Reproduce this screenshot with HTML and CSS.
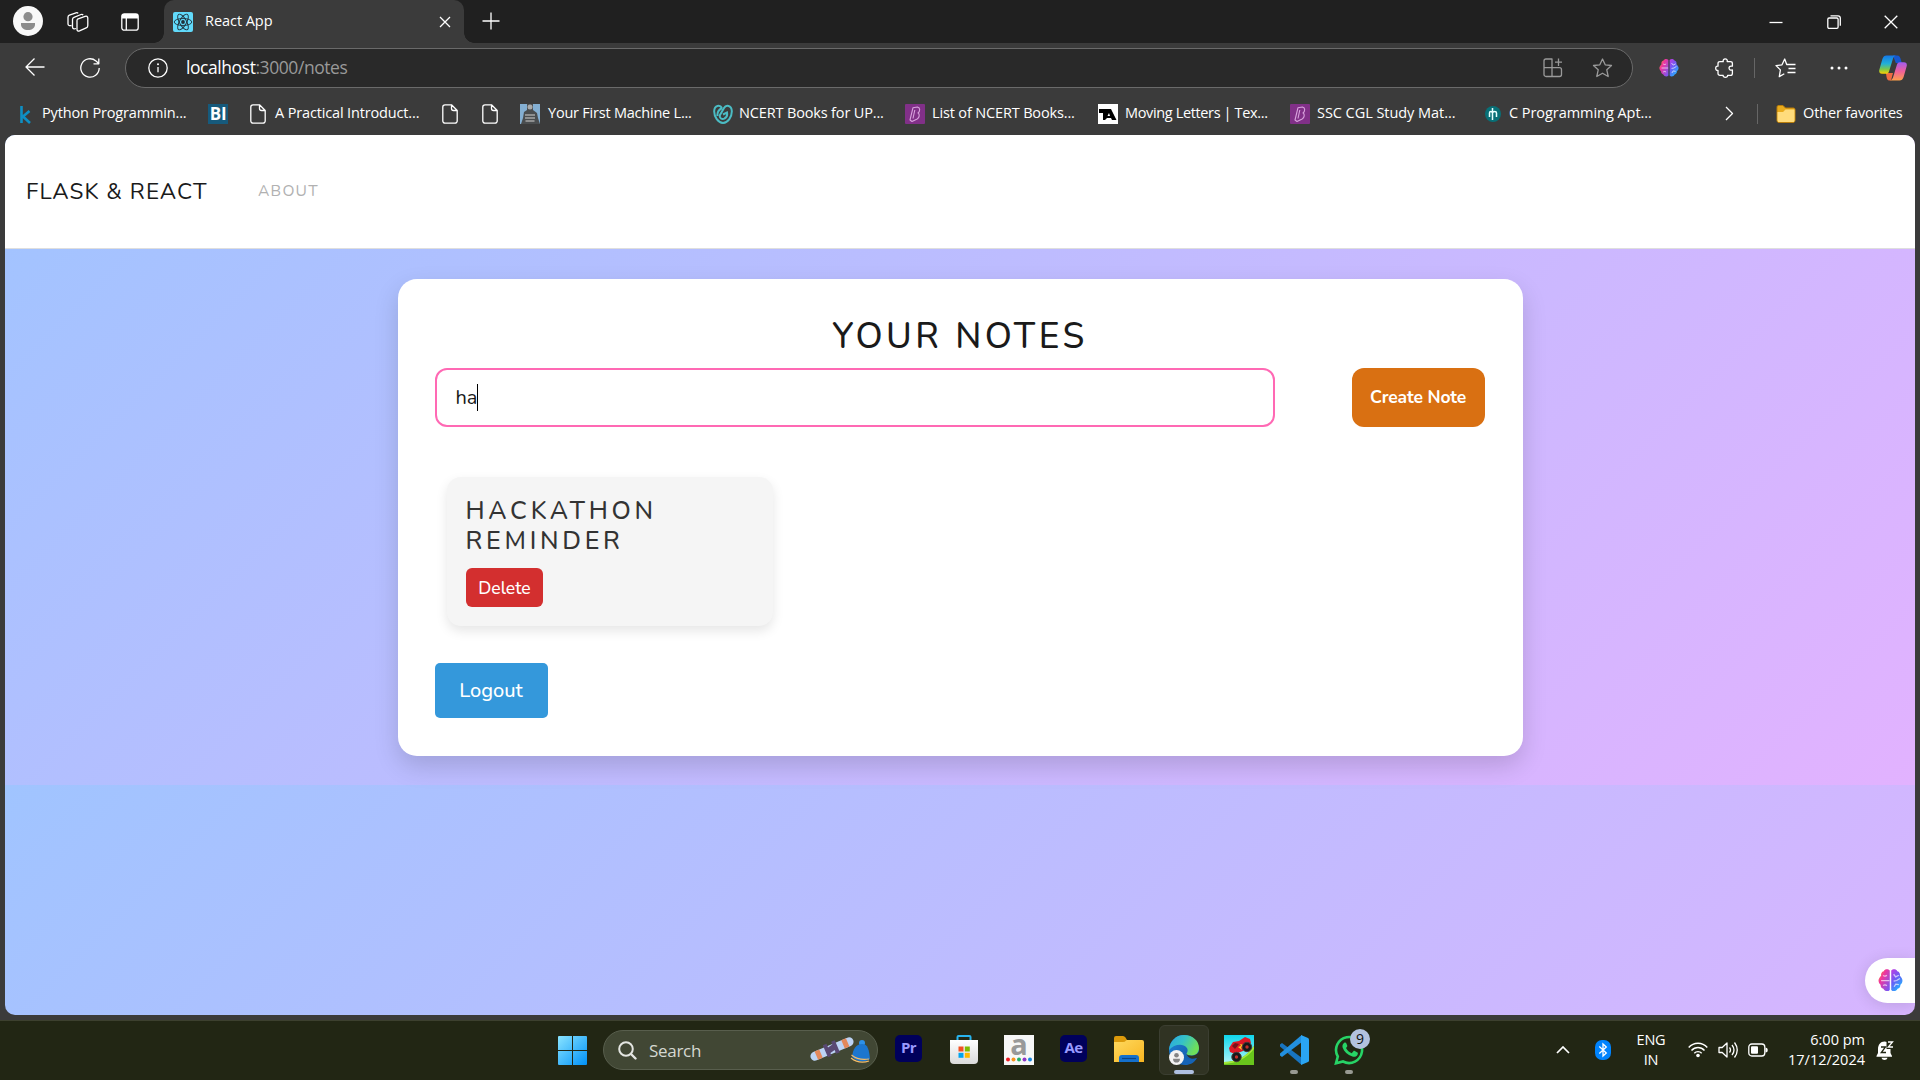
FILE: index.html
```html
<!DOCTYPE html>
<html lang="en">
<head>
<meta charset="utf-8">
<title>React App</title>
<link rel="stylesheet" href="styles.css">
</head>
<body>
<svg class="defs" width="0" height="0">
  <defs>
    <linearGradient id="brainL" x1="0" y1="0" x2="1" y2="1"><stop offset="0" stop-color="#ffa21f"/><stop offset=".35" stop-color="#f0359c"/><stop offset="1" stop-color="#6a5cff"/></linearGradient>
    <linearGradient id="brainR" x1="0" y1="0" x2=".6" y2="1"><stop offset="0" stop-color="#c23be0"/><stop offset=".5" stop-color="#6b5cf5"/><stop offset="1" stop-color="#22b4ff"/></linearGradient>
    <linearGradient id="win" x1="0" y1="0" x2="1" y2="1"><stop offset="0" stop-color="#8ae4ff"/><stop offset="1" stop-color="#0091f8"/></linearGradient>
    <linearGradient id="cpA" x1="0" y1="0" x2="0" y2="1"><stop offset="0" stop-color="#1478e8"/><stop offset=".45" stop-color="#22b0d8"/><stop offset=".75" stop-color="#7cc84a"/><stop offset="1" stop-color="#ffd000"/></linearGradient>
    <linearGradient id="cpB" x1="0" y1="0" x2="0" y2="1"><stop offset="0" stop-color="#a05cf0"/><stop offset=".5" stop-color="#f0609a"/><stop offset="1" stop-color="#ffa04a"/></linearGradient>
    <linearGradient id="fold" x1="0" y1="0" x2="1" y2="1"><stop offset="0" stop-color="#ffd95e"/><stop offset="1" stop-color="#f8b521"/></linearGradient>
    <linearGradient id="edgeA" x1="0" y1="0" x2="1" y2=".4"><stop offset="0" stop-color="#2aa6e0"/><stop offset=".5" stop-color="#35c1c8"/><stop offset="1" stop-color="#6ee05a"/></linearGradient>
    <linearGradient id="edgeB" x1="0" y1="0" x2="1" y2="1"><stop offset="0" stop-color="#2186d8"/><stop offset="1" stop-color="#0d4ea0"/></linearGradient>
    <linearGradient id="bag" x1="0" y1="0" x2="0" y2="1"><stop offset="0" stop-color="#ffffff"/><stop offset="1" stop-color="#dadada"/></linearGradient>
    <linearGradient id="sky" x1="0" y1="0" x2="0" y2="1"><stop offset="0" stop-color="#0fd6ec"/><stop offset="1" stop-color="#b8f5fb"/></linearGradient>
    <symbol id="brain" viewBox="0 0 24 24">
      <path fill="url(#brainL)" d="M11.3 2.5C9.8.6 6.500.8 5.500 3 3.500 3.300 2.500 5.500 3 7.500 1.500 9 0 11 .6 13c.2 1.500 1.200 2.500 1.900 3-.1 2 1 3.500 2.700 3.800.9 2.400 4.400 3.200 6.100 1.200z"/>
      <path fill="url(#brainR)" d="M12.700 2.500c1.500-1.900 4.800-1.700 5.800.5 2 .3 3 2.500 2.500 4.500 1.500 1.500 3 3.500 2.400 5.500-.2 1.500-1.200 2.500-1.900 3 .1 2-1 3.500-2.700 3.800-.9 2.400-4.400 3.200-6.100 1.200z"/>
      <path class="folds" d="M3 12h8M5 7c1 1.300 2.500 1 3.500 0M5 17c1-1.300 2.500-1 3.500 0M15 6l2 2.500L20 7M15 12.500l3-.5 3-2M15.500 18l1.500-2.500 3 .5"/>
    </symbol>
    <symbol id="doc" viewBox="0 0 16 20"><path class="ln" d="M3 .8h6.500L15.200 6.500V17a2.200 2.200 0 0 1-2.200 2.200H3A2.200 2.200 0 0 1 .8 17V3A2.200 2.200 0 0 1 3 .8zM9.500 1v3.500a2 2 0 0 0 2 2H15"/></symbol>
    <symbol id="byju" viewBox="0 0 20 20"><rect width="20" height="20" rx="1" fill="#813088"/><path fill="none" stroke="#d9a3de" stroke-width="1.100" stroke-linejoin="round" d="M8 3.700 12.500 3c2.800.6 2.800 4.300.5 6 2 1 1.500 4.800-.8 6L7 17.500 5 16zM9.800 6 8 14.500"/></symbol>
  </defs>
</svg>

<header class="tabs">
  <svg class="avatar" viewBox="0 0 30 30"><circle cx="15" cy="15" r="15" fill="#f8f8f8"/><circle cx="15" cy="10.700" r="4.600" fill="#8c8c8c"/><path fill="#8c8c8c" d="M8 17h14v1.500c0 3.500-3 5.500-7 5.500s-7-2-7-5.500z"/></svg>
  <svg class="workspaces" viewBox="0 0 22 20"><path class="ln" d="M10.500 7.200 18 4.300c1.500-.5 2.800 0 2.800 1.700v7.500c0 1.300-.5 2-1.600 2.400l-6.700 3c-1.300.5-2.500 0-2.500-1.500V8.700c0-.8.200-1.300.5-1.500zM9 16.500c-2 .8-3.500.3-3.500-1.500V7.500c0-1 .5-1.700 1.500-2.100L14 2.500c1-.3 1.800 0 2.100.6M4.500 13.500C2.500 14 1 13.500 1 12V5.200c0-1 .5-1.600 1.400-2L9 .8c1-.3 1.700-.1 2.100.5"/></svg>
  <svg class="tabmenu" viewBox="0 0 18 18"><rect class="ln" x=".8" y=".8" width="16.400" height="16.400" rx="2.500"/><path fill="#fff" d="M1 1h16v4.500H1z"/><path class="ln" d="M5.300 5v12"/></svg>
  <div class="tab">
    <svg class="react" viewBox="0 0 20 20"><rect width="20" height="20" rx="2" fill="#61dafb"/><g fill="none" stroke="#20303a" stroke-width=".9"><ellipse cx="10" cy="10" rx="8.800" ry="3.500"/><ellipse cx="10" cy="10" rx="8.800" ry="3.500" transform="rotate(60 10 10)"/><ellipse cx="10" cy="10" rx="8.800" ry="3.500" transform="rotate(120 10 10)"/></g><circle cx="10" cy="10" r="1.900" fill="#20303a"/></svg>
    <span class="tab-title">React App</span>
    <svg class="tab-close" viewBox="0 0 12 12"><path class="ln" d="M1 1l10 10M11 1 1 11"/></svg>
  </div>
  <svg class="plus" viewBox="0 0 18 18"><path class="ln" d="M9 .5v17M.5 9h17"/></svg>
  <div class="window-buttons">
    <svg width="14" height="14" viewBox="0 0 14 14"><path class="ln" d="M.5 7.500h13"/></svg>
    <svg width="14" height="14" viewBox="0 0 14 14"><rect class="ln" x=".8" y="3" width="10.300" height="10.300" rx="1.300"/><path class="ln" d="M3.500.8H11a2.300 2.300 0 0 1 2.300 2.300v7.700"/></svg>
    <svg width="14" height="14" viewBox="0 0 14 14"><path class="ln" d="M.7.7l12.600 12.600M13.300.7.7 13.300"/></svg>
  </div>
</header>

<div class="toolbar">
  <svg class="back" viewBox="0 0 20 18"><path class="ln" d="M19.500 9H1M9.500.5 1 9l8.500 8.500"/></svg>
  <svg class="reload" viewBox="0 0 20 20"><path class="ln" d="M19.200 10A9.200 9.200 0 1 1 16 3l2.500 2.300M18.800.5v5.300h-5.300"/></svg>
  <div class="address">
    <svg width="20" height="20" viewBox="0 0 20 20"><circle class="ln" cx="10" cy="10" r="9.200"/><path class="ln" d="M10 9v5.200"/><circle cx="10" cy="6.200" r="1" fill="#fff"/></svg>
    <span class="url"><b>localhost</b>:3000/notes</span>
    <svg class="apps" viewBox="0 0 20 20"><path class="dim" d="M1 3a2 2 0 0 1 2-2h6v17.500H3a2 2 0 0 1-2-2zM1 9.700h15.500a2 2 0 0 1 2 2v4.800a2 2 0 0 1-2 2H9M15.500.5V8M12 4.200h7"/></svg>
    <svg class="star" viewBox="0 0 20 20"><path class="dim" d="m10 1 2.700 5.800 6.300.7-4.700 4.300 1.400 6.700L10 15.200l-5.700 3.300 1.400-6.700L1 7.500l6.300-.7z"/></svg>
  </div>
  <svg class="brain-icon" width="20" height="20"><use href="#brain"/></svg>
  <svg class="puzzle" viewBox="0 0 20 20"><path class="ln" d="M5 3.700h3.200C7.800 1.800 8.800.8 10.200.8s2.500 1 2 2.900h3.200c1.300 0 2 .6 2 1.800v2.700c-1.900-.4-3.400.3-3.400 1.900s1.500 2.400 3.400 1.900v3.400c0 1.200-.8 1.900-2 1.900h-2.800c.2 1.400-.8 2-2.200 2s-2.500-.6-2.200-2H5c-1.300 0-2-.7-2-1.900v-3c-1.500.2-2.300-.7-2.300-2.200S1.600 7.800 3 8.100V5.500c0-1.200.8-1.800 2-1.800z"/></svg>
  <i class="divider"></i>
  <svg class="favs" viewBox="0 0 21 20"><path class="ln" d="M14 6.500h-2.300L9.700 1 7 6.800 1 7.600l4.400 4.300-1.100 6.700 5-2.900M20.500 6.500H14M20.500 10.500h-7M20.500 14.500h-8"/></svg>
  <svg class="more" viewBox="0 0 18 4"><g fill="#fff"><circle cx="2" cy="2" r="1.500"/><circle cx="9" cy="2" r="1.500"/><circle cx="16" cy="2" r="1.500"/></g></svg>
  <svg class="copilot" viewBox="0 0 28 26"><path fill="#1657cf" d="M14 .5h4c2.500 0 3.300 2 3.800 4l1 3.500h-6z"/><path fill="#f06a42" d="M7 18h7l-2 7.500h-1.500C8 25.500 7.500 23 7 18z"/><path fill="url(#cpA)" d="M7.500.5H17c-2 .5-2.700 2-3.300 4L10 16.500c-.5 1.500-1.500 2.300-3 2.300H3c-2.500 0-3.300-1.800-2.600-4.300l3-10.500C4.200 1.500 5.500.5 7.500.5z"/><path fill="url(#cpB)" d="M20.500 25.500H11c2-.5 2.700-2 3.300-4L18 9.500c.5-1.500 1.500-2.300 3-2.300h4c2.500 0 3.300 1.800 2.600 4.300l-3 10.500c-.8 2.500-2.100 3.500-4.100 3.500z"/></svg>
</div>

<nav class="bookmarks">
  <a class="bm b1"><svg viewBox="0 0 20 20"><path fill="none" stroke="#0e8fc4" stroke-width="2.600" d="M6.500 2v17M14.500 7 8 12.500l7 6.500"/></svg><span>Python Programmin...</span></a>
  <a class="bm b2"><b class="bi">BI</b></a>
  <a class="bm b3"><svg class="page-icon"><use href="#doc"/></svg><span>A Practical Introduct...</span></a>
  <a class="bm b4"><svg class="page-icon"><use href="#doc"/></svg></a>
  <a class="bm b5"><svg class="page-icon"><use href="#doc"/></svg></a>
  <a class="bm b6"><svg viewBox="0 0 20 20"><path fill="#84afd2" d="M0 0h20v20H0z"/><path fill="#4a4d4f" d="M7 0h6v6l4 3 1 5 2 6H1l2-6 1-6 3-2z"/><circle cx="10" cy="3" r="2.500" fill="#aaa"/><path stroke="#a5a5a5" stroke-width="1.500" d="M5 11h10M5 14h10M5.500 17h9"/></svg><span>Your First Machine L...</span></a>
  <a class="bm b7"><svg viewBox="0 0 20 20"><path fill="none" stroke="#4bbcc4" stroke-width="2" d="M9 4C7 .5 1.500 1 1.200 7c-.2 6 4 11.500 8.800 12 5-.5 9-6 8.800-12C18.500 1 13 .5 11 4L7 11c-1 3 2 5 4.500 3.500 2-1 3-3.500 2.500-6l-4 2M9 4c-3 1.500-5 4-4.500 8"/></svg><span>NCERT Books for UP...</span></a>
  <a class="bm b8"><svg><use href="#byju"/></svg><span>List of NCERT Books...</span></a>
  <a class="bm b9"><svg viewBox="0 0 20 20"><path fill="#fff" d="M0 0h20v20H0z"/><path d="M1 5h12l5.500 11H14l-1-2H9l-2 2H5V9H1zm10 4-1.500 3H12z"/></svg><span>Moving Letters | Tex...</span></a>
  <a class="bm b10"><svg><use href="#byju"/></svg><span>SSC CGL Study Mat...</span></a>
  <a class="bm b11"><svg viewBox="0 0 20 20"><circle cx="10" cy="10" r="8" fill="#087077"/><path fill="none" stroke="#e8ffff" stroke-width="1.500" d="M6.500 13V9c0-2 2.500-2 3 0v7M9.500 4v5c.5-2 4-2 4 0v4"/></svg><span>C Programming Apt...</span></a>
  <svg class="chev" viewBox="0 0 9 15"><path class="ln" d="m1 1 6.500 6.500L1 14"/></svg>
  <i class="divider"></i>
  <a class="bm b12"><svg viewBox="0 0 20 20"><path fill="#e9ab1c" stroke="#b97d0b" d="M1 3.500C1 2 1.500 1.500 3 1.500h4L9.500 4H17c1.500 0 2 .5 2 2v10c0 1.500-.5 2.500-2 2.500H3c-1.500 0-2-1-2-2.500z"/><path fill="#ffdc7c" d="M1.500 8H7l2.500-2.500h9V16c0 1.500-.5 2-1.500 2H3c-1 0-1.500-.5-1.500-2z"/></svg><span>Other favorites</span></a>
</nav>

<main class="viewport">
  <nav class="site-nav"><a class="brand">FLASK &amp; REACT</a><a class="about">ABOUT</a></nav>
  <section class="stage">
    <div class="card">
      <h1>YOUR NOTES</h1>
      <div class="form"><div class="field">ha<i class="caret"></i></div><button class="create">Create Note</button></div>
      <article class="note"><h2>HACKATHON<br>REMINDER</h2><button class="delete">Delete</button></article>
      <button class="logout">Logout</button>
    </div>
  </section>
  <div class="side-badge"><svg width="25" height="25"><use href="#brain"/></svg></div>
</main>

<footer class="taskbar">
  <svg class="start" viewBox="0 0 29 29"><path fill="url(#win)" d="M0 1q0-1 1-1h13v14H0zM15 0h13q1 0 1 1v13H15zM0 15h14v14H1q-1 0-1-1zM15 15h14v13q0 1-1 1H15z"/></svg>
  <div class="search">
    <svg width="19" height="19" viewBox="0 0 19 19"><circle cx="8" cy="8" r="6.800" fill="none" stroke="#e4e6e2" stroke-width="2"/><path stroke="#e4e6e2" stroke-width="2.400" stroke-linecap="round" d="m13 13 4.500 4.500"/></svg>
    <span>Search</span>
    <svg class="winter" width="62" height="28" viewBox="0 0 62 28"><g transform="rotate(-23 23 13)"><rect x="0" y="8.500" width="46" height="9" rx="4.500" fill="#bcd3f5"/><path fill="#e3885b" d="M6 8.500h5v9H6zM35 8.500h5v9h-5z"/><path fill="#594873" d="M16 6h4v4l5-1V6h4v13h-4v-4l-5 1v3h-4z"/></g><circle cx="53" cy="7" r="3" fill="#2d91e8"/><path fill="#1c76cf" d="M43 21C44 13 47 8 53 8s7 6 8 15c-5 4-13 3-18-2z"/><path fill="none" stroke="#f3bc68" stroke-width="1.200" d="M42.500 19c5 4 12 5 17.500 4M42 22c5 4 12 5 18 3"/></svg>
  </div>
  <b class="adobe pr">Pr</b>
  <svg class="store" viewBox="0 0 30 30"><path fill="none" stroke="#28b4ee" stroke-width="2" d="M8.500 6V2q0-1 1-1h11q1 0 1 1v4"/><path fill="url(#bag)" d="M1 5h28v20q0 4-4 4H5q-4 0-4-4z"/><path fill="#f25022" d="M9.500 11.500h5v5h-5z"/><path fill="#7fba00" d="M15.800 11.500h5v5h-5z"/><path fill="#00a4ef" d="M9.500 17.800h5v5h-5z"/><path fill="#ffb900" d="M15.800 17.800h5v5h-5z"/></svg>
  <div class="letter-a"><b>a</b><svg width="26" height="5" viewBox="0 0 26 5"><circle cx="2" cy="2.500" r="2" fill="#ee1c24"/><circle cx="7.500" cy="2.500" r="2" fill="#f7941d"/><circle cx="13" cy="2.500" r="2" fill="#22b066"/><circle cx="18.500" cy="2.500" r="2" fill="#8d36c8"/><circle cx="24" cy="2.500" r="2" fill="#1586e0"/></svg></div>
  <b class="adobe ae">Ae</b>
  <svg class="folder" viewBox="0 0 30 28"><path fill="#dc9a0b" d="M0 2q0-2 2-2h7q1.500 0 2.500 1.500L13 4H27v8H0z"/><path fill="url(#fold)" d="M0 6h9q2 0 3-1.500L13 4h15q2 0 2 2v20H0z"/><path fill="#1470cc" d="M5 26v-4q0-3 3-3h14q3 0 3 3v4z"/><path stroke="#0b4385" stroke-width="1.200" d="M8 22.500h14"/></svg>
  <div class="active-app">
    <svg width="30" height="30" viewBox="0 0 30 30"><circle cx="15" cy="15" r="15" fill="url(#edgeB)"/><path fill="url(#edgeA)" d="M0 15C1 6 7 0 15 0c9 0 15 6 15 13 0 5-3.500 7.500-8 7.500-3.500 0-4.500-1-4.500-2 1.500-2 1.500-4.500 0-6C14 8 5 9 0 15z"/><path fill="#303323" d="M30 21.500c-1 1-2 1.500-3 2-4 1-8.500-.5-9.500-5 .5 1.500 2.500 2.200 5 2.200 3 0 6-1.200 7.500-4z"/><path fill="#1563b5" d="M14 15c-2 6 3 11 14 8-3 5-7 7-12 7-6-2-7-10-2-15z"/><circle cx="7.500" cy="22.500" r="7.500" fill="#f3f3f3"/><circle cx="7.500" cy="20.300" r="2.300" fill="#848484"/><path fill="#848484" d="M4 23.700h7c0 3-1.500 3.800-3.500 3.800S4 26.700 4 23.700z"/></svg><i></i>
  </div>
  <svg class="game" viewBox="0 0 30 30"><path fill="url(#sky)" d="M0 0h30v30H0z"/><path fill="#69c51c" d="M0 27C12 27 22 22 30 11v19H0z"/><path fill="#a6e83c" d="M0 27C12 27 22 22 30 11v3C22 24 12 28 0 29z"/><path fill="#dd1826" d="m5 13 4-6 6-1 6-4 5 2 1 4-8 8-8 3-5-2z"/><path fill="#75131b" d="m8 11 3-3 4 1-4 5z"/><path fill="#ffcf21" d="m16 9 4 1-3 2 1 3-4-3 3-1z"/><g fill="#17191b" stroke="#443b38"><circle cx="12.500" cy="22" r="4.700"/><circle cx="23" cy="12" r="4.700"/></g><g fill="#c3302a"><circle cx="12.500" cy="22" r="1.700"/><circle cx="23" cy="12" r="1.700"/></g></svg>
  <div class="app vs"><svg width="30" height="30" viewBox="0 0 30 30"><path fill="#1874c0" d="M1 9.500 3 8l20 15v6.500L21.500 29 1 11.500z"/><path fill="#2290df" d="M1 20.500 3 22 23 7V.5L21.500 1 1 18.500z"/><path fill="#2aa5f4" d="m22 0 7 3q1 .5 1 1.500v21q0 1-1 1.500l-7 3z"/></svg><i></i></div>
  <div class="app wa"><svg width="30" height="30" viewBox="0 0 30 30"><path fill="none" stroke="#27d366" stroke-width="2.600" d="M2 28.300 3.800 21.500A13 13 0 1 1 9 26.500z"/><path fill="#27d366" d="M10 8c1-.9 2-.5 2.400.5l.9 2.300c.2.800-.8 1.600-1.300 2.200 1.400 2.600 3.200 4.100 5.700 5.200l1.700-2c.4-.5.8-.4 1.400-.1l2.600 1.300c.7.400.5 1 .3 1.800-.7 2.200-3 3-5.300 2.400-5-1.500-8.300-4.700-9.800-9C8 10.500 9 8.800 10 8z"/></svg><span class="count">9</span><i></i></div>
  <svg class="up" viewBox="0 0 14 8"><path fill="none" stroke="#fff" stroke-width="1.700" d="m1 7 6-6 6 6"/></svg>
  <svg class="bt" viewBox="0 0 16 20"><rect width="16" height="20" rx="7" fill="#0083fd"/><path fill="none" stroke="#fff" stroke-width="1.300" d="m4.300 6.500 7 6.500L8 16V4l3.300 3-7 6.500"/></svg>
  <div class="lang">ENG<br>IN</div>
  <svg class="wifi" viewBox="0 0 20 16"><g fill="none" stroke="#fff" stroke-width="1.400"><path d="M.7 5.500c5-5.700 13.600-5.700 18.600 0M3.500 8.500c3.600-4 9.400-4 13 0M6.300 11.300c2-2.300 5.400-2.300 7.400 0"/></g><circle cx="10" cy="13.500" r="1.800" fill="#fff"/></svg>
  <svg class="sound" viewBox="0 0 20 18"><path class="ln" d="M1 6.500h3.200L9 2v14l-4.800-4.500H1zM11.500 6.500q2 2.500 0 5M14 4q4 5 0 10M16.500 1.500q5.500 7.500 0 15"/></svg>
  <svg class="battery" viewBox="0 0 20 14"><rect class="ln" x=".8" y="1" width="16" height="12" rx="3"/><rect x="3" y="3.200" width="7" height="7.600" rx="1" fill="#fff"/><path fill="#fff" d="M17.500 4.500q2.300 0 2.300 2.500t-2.300 2.500z"/></svg>
  <div class="clock">6:00 pm<br>17/12/2024</div>
  <svg class="bell" viewBox="0 0 18 20"><path fill="#fff" d="M2 9c0-4 2.500-7.500 6.500-7.500 2 0 3.500.7 4.500 2 1.200 1.500 1.500 3.500 1.500 5.500v4l1.500 3v.8H.5V16L2 13zM5.500 17.800h6C11 19.300 10 20 8.500 20s-2.500-.7-3-2.200z"/><path fill="none" stroke="#222614" stroke-width="1.300" d="M5 7h4.500L5.300 12.500H10"/><path fill="#222614" d="M10.500 0H18v9h-7.500z"/><path fill="none" stroke="#fff" stroke-width="1.300" d="M12 2h4.500l-4.200 5H17"/></svg>
</footer>
</body>
</html>
```
FILE: styles.css
```css
* { box-sizing: border-box; }
body { margin: 0; width: 1920px; height: 1080px; overflow: hidden; display: flex; flex-direction: column; background: #3b3b3b; color: #fff; font: 15px "Segoe UI", "Open Sans", sans-serif; }
svg { flex: none; display: block; }
.defs { position: absolute; }
.ln { fill: none; stroke: #fff; stroke-width: 1.3; stroke-linejoin: round; }
.dim { fill: none; stroke: #9a9a9a; stroke-width: 1.3; stroke-linejoin: round; }
.folds { fill: none; stroke: #ffffff; stroke-opacity: .65; stroke-width: 1.2; }
.toolbar .folds { stroke: #333; }
.divider { width: 1px; height: 20px; background: #666; flex: none; }

.tabs { height: 43px; flex: none; display: flex; align-items: center; background: #202020; padding-left: 13px; }
.avatar { width: 30px; height: 30px; margin-bottom: 1px; }
.workspaces { width: 22px; height: 20px; margin-left: 24px; }
.tabmenu { width: 18px; height: 18px; margin-left: 32px; }
.tab { width: 300px; height: 43px; margin-left: 25px; padding: 0 13px 0 9px; display: flex; align-items: center; background: #3b3b3b; border-radius: 10px 10px 0 0; position: relative; }
.tab::before, .tab::after { content: ""; position: absolute; bottom: 0; width: 10px; height: 10px; }
.tab::before { left: -10px; background: radial-gradient(circle at 0 0, #202020 9.5px, #3b3b3b 10px); }
.tab::after { right: -10px; background: radial-gradient(circle at 100% 0, #202020 9.5px, #3b3b3b 10px); }
.react { width: 20px; height: 20px; }
.tab-title { margin-left: 12px; padding-bottom: 2px; font-size: 14.5px; letter-spacing: -.05px; flex: 1; }
.tab-close { width: 12px; height: 12px; }
.plus { width: 18px; height: 18px; margin-left: 18px; margin-bottom: 1px; }
.window-buttons { margin-left: auto; display: flex; gap: 43.500px; padding-right: 22px; }

.toolbar { height: 49px; flex: none; display: flex; align-items: center; padding: 0 13px 0 25px; }
.back { width: 20px; height: 18px; margin-bottom: 1px; }
.reload { width: 20px; height: 20px; margin-left: 35px; }
.address { width: 1508px; height: 40px; margin-left: 25px; padding: 0 19px 0 22px; display: flex; align-items: center; border: 1px solid #6a6a6a; border-radius: 20px; background: #292929; }
.url { flex: 1; margin-left: 18px; padding-bottom: 2px; font-size: 17.5px; letter-spacing: -.43px; color: #999; }
.url b { font-weight: 400; color: #fff; }
.apps { width: 20px; height: 20px; }
.star { width: 21px; height: 20px; margin-left: 29px; }
.brain-icon { margin-left: 26px; }
.puzzle { width: 20px; height: 20px; margin-left: 36px; }
.toolbar .divider { margin-left: 19px; }
.favs { width: 21px; height: 20px; margin-left: 20px; }
.more { width: 18px; height: 4px; margin-left: 34px; }
.copilot { width: 28px; height: 26px; margin-left: 31px; }

.bookmarks { height: 43px; flex: none; display: flex; align-items: center; padding-left: 15px; }
.bm { display: flex; align-items: center; gap: 7px; height: 24px; white-space: nowrap; font-size: 14.5px; letter-spacing: -.15px; flex: none; }
.bm span { padding-bottom: 2px; }
.bm svg { width: 20px; height: 20px; }
.bm .page-icon { width: 16px; }
.b1 { width: 193px; }
.b2 { width: 42px; }
.b3 { width: 192px; gap: 9px; }
.b4 { width: 40px; }
.b5 { width: 38px; }
.b6 { width: 193px; gap: 8px; letter-spacing: -.22px; }
.b7 { width: 192px; gap: 6px; }
.b9 { width: 192px; letter-spacing: -.36px; }
.b8 { width: 193px; }
.b10 { width: 193px; letter-spacing: -.05px; }
.b11 { width: 242px; gap: 6px; letter-spacing: -.05px; }
.bi { width: 20px; height: 20px; background: #165a7c; font: bold 17px/20px "Open Sans", sans-serif; text-align: center; }
.chev { width: 9px; height: 15px; }
.bookmarks .divider { margin: 0 18px 0 23px; }

.viewport { width: 1910px; height: 880px; margin: 0 5px; flex: none; overflow: hidden; position: relative; border-radius: 10px; background: linear-gradient(135deg, #a0c4ff, #e2b2ff) 0 0 / 100% 650px; font-family: Nunito, Lato, sans-serif; }
.site-nav { height: 114px; padding: 0 21px 1px; display: flex; align-items: center; background: #fff; border-bottom: 1px solid #dedede; }
.brand { width: 232px; color: #1a1a1a; font-size: 22.500px; letter-spacing: 1.05px; }
.about { color: #b1b1b1; font-size: 15.600px; letter-spacing: 1.25px; }
.stage { padding-top: 30px; }
.card { width: 1125px; height: 477px; margin: 0 auto; padding: 37px; background: #fff; border-radius: 19px; box-shadow: 0 10px 25px rgba(0,0,0,.15); }
h1, h2 { margin: 0; font-weight: 500; }
h1 { height: 52px; line-height: 41px; text-align: center; font-size: 35.200px; letter-spacing: 3.5px; color: #1a1a1a; }
.form { display: flex; justify-content: space-between; margin: 0 1px 50px 0; }
.field { width: 840px; height: 59px; padding-left: 19px; display: flex; align-items: center; border: 2px solid #ff69b4; border-radius: 12px; color: #1a1a1a; font-size: 20px; }
.caret { width: 1px; height: 27px; background: #000; }
button { border: 0; padding: 0; color: #fff; font-family: inherit; display: block; }
.create { width: 133px; height: 59px; padding-bottom: 1px; border-radius: 12px; background: #d97012; font-size: 17.500px; font-weight: 700; letter-spacing: -.15px; }
.note { width: 326px; height: 149px; margin-left: 12px; padding: 19px 19px 0; border-radius: 14px; background: #f5f5f5; box-shadow: 0 5px 12px rgba(0,0,0,.1); }
h2 { height: 72px; line-height: 30px; font-size: 25px; letter-spacing: 3.75px; color: #333; }
.delete { width: 77px; height: 39px; padding-left: 1px; border-radius: 6px; background: #d32f2f; font-size: 17.500px; font-weight: 500; }
.logout { width: 113px; height: 55px; margin-top: 37px; border-radius: 5px; background: #3498db; font-size: 20px; font-weight: 500; }
.side-badge { position: absolute; right: 0; bottom: 12px; width: 50px; height: 45px; padding: 10px 12px 10px 13px; background: #fff; border-radius: 23px 0 0 23px; box-shadow: 0 2px 15px rgba(0,0,0,.12); }

.taskbar { height: 60px; margin-top: 5px; flex: none; display: flex; align-items: center; padding: 0 26px 1px 558px; background: #222614; border-top: 1px solid #3d402f; }
.start { width: 29px; height: 29px; }
.search { width: 275px; height: 40px; margin-left: 16px; padding: 0 6px 0 14px; display: flex; align-items: center; background: #414734; border: 1px solid #585e4d; border-radius: 20px; color: #d5d8d1; font-size: 17px; }
.search span { flex: 1; margin-left: 12px; letter-spacing: -.3px; }
.adobe { width: 27px; height: 27px; margin-bottom: 3px; border-radius: 5px; background: #00005b; color: #9999ff; font: bold 15px/25px "Open Sans", sans-serif; text-align: center; letter-spacing: -.5px; }
.pr { margin-left: 17px; }
.store { width: 30px; height: 30px; margin-left: 27px; }
.letter-a { width: 30px; height: 30px; margin-left: 25px; display: flex; flex-direction: column; align-items: center; background: #f7f7f7; color: #999; }
.letter-a b { height: 22px; font: bold 29px/18px "Open Sans", sans-serif; }
.ae { margin-left: 26px; }
.folder { width: 30px; height: 28px; margin-left: 27px; }
.active-app { width: 50px; height: 50px; margin-left: 15px; padding: 9px 10px 0; position: relative; border: 1px solid #3b3e31; border-radius: 6px; background: #303323; }
.active-app svg { margin-left: -1px; }
.active-app i { position: absolute; bottom: 0; left: 14px; width: 20px; height: 4px; border-radius: 2px; background: #aebfe0; }
.game { width: 30px; height: 30px; margin-left: 15px; }
.app { width: 30px; height: 30px; margin-left: 25px; position: relative; }
.app i { position: absolute; left: 11px; bottom: -9px; width: 8px; height: 4px; border-radius: 2px; background: #989a92; }
.count { position: absolute; left: 16px; top: -6px; width: 20px; height: 20px; border-radius: 50%; background: #b3c2df; color: #111; font-size: 14px; line-height: 20px; text-align: center; }
.up { width: 14px; height: 8px; margin-left: auto; }
.bt { width: 16px; height: 20px; margin-left: 25px; }
.lang { width: 40px; margin-left: 20px; text-align: center; line-height: 20px; font-size: 14.5px; letter-spacing: -.2px; }
.wifi { width: 20px; height: 16px; margin-left: 17px; }
.sound { width: 20px; height: 18px; margin-left: 10px; }
.battery { width: 20px; height: 14px; margin-left: 10px; }
.clock { width: 85px; margin-left: 12px; text-align: right; line-height: 20px; font-size: 14.5px; letter-spacing: 0; white-space: nowrap; }
.bell { width: 18px; height: 20px; margin-left: 11px; }
```
